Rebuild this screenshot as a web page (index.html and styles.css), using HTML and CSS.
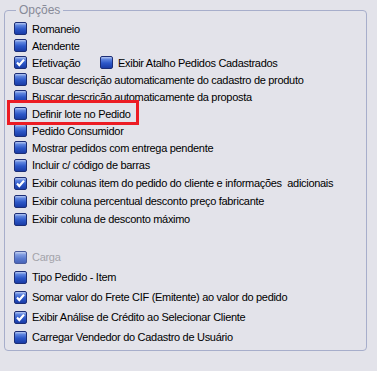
FILE: index.html
```html
<!DOCTYPE html>
<html lang="pt">

<head>
    <meta charset="utf-8">
    <title>Opções</title>
    <link rel="stylesheet" href="styles.css">
</head>

<body>

    <fieldset class="grupo">
        <legend>Opções</legend>
        <div class="opcoes">
            <div class="linha"><span class="cx"></span><span>Romaneio</span></div>
            <div class="linha"><span class="cx"></span><span>Atendente</span></div>
            <div class="linha">
                <div class="item largo"><span class="cx marcado"><svg viewBox="0 0 13 13"><path d="M3 6.5 L5.3 9 L10 3.6"/></svg></span><span>Efetivação</span></div>
                <div class="item"><span class="cx"></span><span>Exibir Atalho Pedidos Cadastrados</span></div>
            </div>
            <div class="linha"><span class="cx"></span><span>Buscar descrição automaticamente do cadastro de produto</span></div>
            <div class="linha"><span class="cx"></span><span>Buscar descrição automaticamente da proposta</span></div>
            <div class="linha"><span class="cx"></span><span>Definir lote no Pedido</span></div>
            <div class="linha"><span class="cx"></span><span>Pedido Consumidor</span></div>
            <div class="linha"><span class="cx"></span><span>Mostrar pedidos com entrega pendente</span></div>
            <div class="linha alta"><span class="cx"></span><span>Incluir c/ código de barras</span></div>
            <div class="linha alta"><span class="cx marcado"><svg viewBox="0 0 13 13"><path d="M3 6.5 L5.3 9 L10 3.6"/></svg></span><span>Exibir colunas item do pedido do cliente e informações&nbsp; adicionais</span></div>
            <div class="linha alta"><span class="cx"></span><span>Exibir coluna percentual desconto preço fabricante</span></div>
            <div class="linha alta"><span class="cx"></span><span>Exibir coluna de desconto máximo</span></div>

            <div class="linha vinte separa desativado"><span class="cx"></span><span>Carga</span></div>
            <div class="linha vinte"><span class="cx"></span><span>Tipo Pedido - Item</span></div>
            <div class="linha vinte"><span class="cx marcado"><svg viewBox="0 0 13 13"><path d="M3 6.5 L5.3 9 L10 3.6"/></svg></span><span>Somar valor do Frete CIF (Emitente) ao valor do pedido</span></div>
            <div class="linha vinte"><span class="cx marcado"><svg viewBox="0 0 13 13"><path d="M3 6.5 L5.3 9 L10 3.6"/></svg></span><span>Exibir Análise de Crédito ao Selecionar Cliente</span></div>
            <div class="linha vinte"><span class="cx"></span><span>Carregar Vendedor do Cadastro de Usuário</span></div>
        </div>
    </fieldset>

    <div class="destaque"></div>

</body></html>
```

FILE: styles.css
```css
html,
body {
    margin: 0;
    height: 100%;
}

body {
    position: relative;
    background-color: #e3e3ea;
    font-family: "Liberation Sans", Arial, sans-serif;
    font-size: 11px;
    letter-spacing: -0.3px;
    color: #000;
}

.grupo {
    margin: 3px 10px 0 4px;
    padding: 0 0 0 9px;
    height: 348px;
    box-sizing: border-box;
    border: 1px solid #a7aecb;
    border-radius: 4px;
}

.grupo legend {
    margin-left: 2px;
    padding: 0 3px;
    line-height: 14px;
    font-size: 12px;
    letter-spacing: 0;
    color: #878a98;
}

.opcoes {
    padding-top: 3px;
    display: flex;
    flex-direction: column;
}

.linha {
    display: flex;
    align-items: center;
    height: 17px;
    white-space: nowrap;
}

.linha.alta {
    height: 18px;
}

.linha.vinte {
    height: 20px;
}

.linha.separa {
    margin-top: 19px;
}

.item {
    display: flex;
    align-items: center;
}

.largo {
    width: 86px;
}

.cx {
    flex: none;
    width: 11px;
    height: 11px;
    margin-right: 5px;
    border: 1px solid #1c2e76;
    border-radius: 2px;
    background: linear-gradient(to bottom, #b4c6f2 0%, #5e84de 22%, #2d58c9 55%, #1a3ca6 100%);
    position: relative;
}

.cx svg {
    position: absolute;
    left: -1px;
    top: -1px;
    width: 13px;
    height: 13px;
}

.cx svg path {
    fill: none;
    stroke: #fff;
    stroke-width: 2.2;
}

.desativado {
    color: #a3a3ab;
}

.desativado .cx {
    border-color: #4a5c9c;
    background: linear-gradient(to bottom, #c4d0f0 0%, #7f9be0 25%, #5b7bcf 60%, #4864b8 100%);
}

.destaque {
    position: absolute;
    left: 7px;
    top: 100px;
    width: 126px;
    height: 19px;
    border: 3px solid #ec1c24;
}
```
